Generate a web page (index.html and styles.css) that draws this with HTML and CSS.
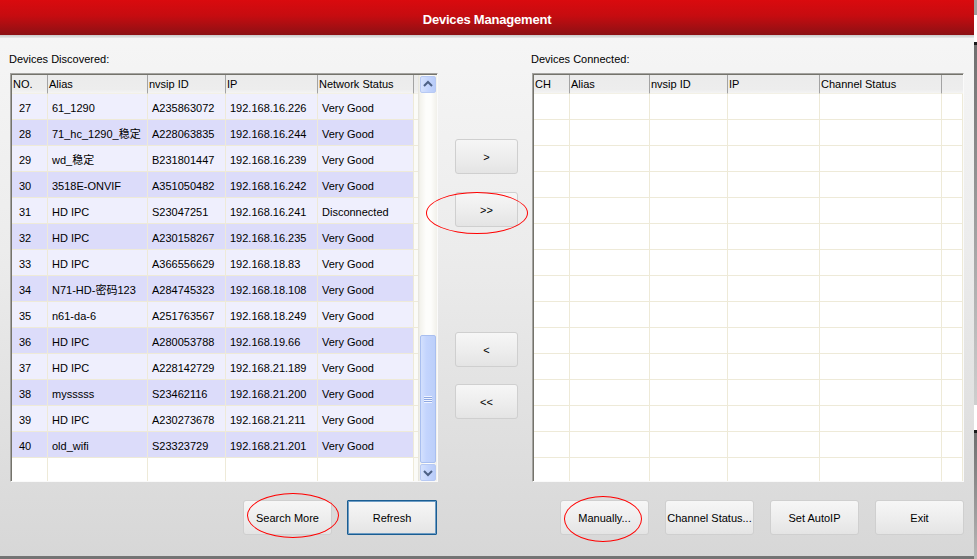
FILE: index.html
```html
<!DOCTYPE html>
<html lang="en">
<head>
<meta charset="utf-8">
<title>Devices Management</title>
<link rel="stylesheet" href="styles.css">
</head>
<body>
<div class="screen">
  <div class="window">
    <div class="titlebar">Devices Management</div>
    <div class="title-rule"></div>
    <div class="content">
      <div class="panels">
        <section class="panel">
          <div class="panel-label">Devices Discovered:</div>
          <div class="frame frame-left">
            <div class="list list-left">
              <div class="list-head">
                <div class="hcell">NO.</div>
                <div class="hcell">Alias</div>
                <div class="hcell">nvsip ID</div>
                <div class="hcell">IP</div>
                <div class="hcell">Network Status</div>
                <div class="hcell"></div>
              </div>
              <div class="list-row odd"><div class="cell first">27</div><div class="cell">61_1290</div><div class="cell">A235863072</div><div class="cell">192.168.16.226</div><div class="cell">Very Good</div><div class="cell pad"></div></div>
              <div class="list-row even"><div class="cell first">28</div><div class="cell">71_hc_1290_稳定</div><div class="cell">A228063835</div><div class="cell">192.168.16.244</div><div class="cell">Very Good</div><div class="cell pad"></div></div>
              <div class="list-row odd"><div class="cell first">29</div><div class="cell">wd_稳定</div><div class="cell">B231801447</div><div class="cell">192.168.16.239</div><div class="cell">Very Good</div><div class="cell pad"></div></div>
              <div class="list-row even"><div class="cell first">30</div><div class="cell">3518E-ONVIF</div><div class="cell">A351050482</div><div class="cell">192.168.16.242</div><div class="cell">Very Good</div><div class="cell pad"></div></div>
              <div class="list-row odd"><div class="cell first">31</div><div class="cell">HD IPC</div><div class="cell">S23047251</div><div class="cell">192.168.16.241</div><div class="cell">Disconnected</div><div class="cell pad"></div></div>
              <div class="list-row even"><div class="cell first">32</div><div class="cell">HD IPC</div><div class="cell">A230158267</div><div class="cell">192.168.16.235</div><div class="cell">Very Good</div><div class="cell pad"></div></div>
              <div class="list-row odd"><div class="cell first">33</div><div class="cell">HD IPC</div><div class="cell">A366556629</div><div class="cell">192.168.18.83</div><div class="cell">Very Good</div><div class="cell pad"></div></div>
              <div class="list-row even"><div class="cell first">34</div><div class="cell">N71-HD-密码123</div><div class="cell">A284745323</div><div class="cell">192.168.18.108</div><div class="cell">Very Good</div><div class="cell pad"></div></div>
              <div class="list-row odd"><div class="cell first">35</div><div class="cell">n61-da-6</div><div class="cell">A251763567</div><div class="cell">192.168.18.249</div><div class="cell">Very Good</div><div class="cell pad"></div></div>
              <div class="list-row even"><div class="cell first">36</div><div class="cell">HD IPC</div><div class="cell">A280053788</div><div class="cell">192.168.19.66</div><div class="cell">Very Good</div><div class="cell pad"></div></div>
              <div class="list-row odd"><div class="cell first">37</div><div class="cell">HD IPC</div><div class="cell">A228142729</div><div class="cell">192.168.21.189</div><div class="cell">Very Good</div><div class="cell pad"></div></div>
              <div class="list-row even"><div class="cell first">38</div><div class="cell">mysssss</div><div class="cell">S23462116</div><div class="cell">192.168.21.200</div><div class="cell">Very Good</div><div class="cell pad"></div></div>
              <div class="list-row odd"><div class="cell first">39</div><div class="cell">HD IPC</div><div class="cell">A230273678</div><div class="cell">192.168.21.211</div><div class="cell">Very Good</div><div class="cell pad"></div></div>
              <div class="list-row even"><div class="cell first">40</div><div class="cell">old_wifi</div><div class="cell">S23323729</div><div class="cell">192.168.21.201</div><div class="cell">Very Good</div><div class="cell pad"></div></div>
              <div class="list-row"><div class="cell"></div><div class="cell"></div><div class="cell"></div><div class="cell"></div><div class="cell"></div><div class="cell pad"></div></div>
            </div>
            <div class="vscroll">
              <div class="sbtn sbtn-up">
                <svg width="16" height="17" viewBox="0 0 16 17"><path d="M4 10 L8 6 L12 10" fill="none" stroke="#4d6185" stroke-width="2"/></svg>
              </div>
              <div class="strack"></div>
              <div class="sthumb"><span class="grip"></span></div>
              <div class="sbtn sbtn-down">
                <svg width="16" height="17" viewBox="0 0 16 17"><path d="M4 7 L8 11 L12 7" fill="none" stroke="#4d6185" stroke-width="2"/></svg>
              </div>
            </div>
          </div>
        </section>

        <div class="movers">
          <button class="btn mover">&gt;</button>
          <button class="btn mover mover-2">&gt;&gt;</button>
          <button class="btn mover mover-3">&lt;</button>
          <button class="btn mover mover-4">&lt;&lt;</button>
        </div>

        <section class="panel">
          <div class="panel-label">Devices Connected:</div>
          <div class="frame frame-right">
            <div class="list list-right">
              <div class="list-head">
                <div class="hcell">CH</div>
                <div class="hcell">Alias</div>
                <div class="hcell">nvsip ID</div>
                <div class="hcell">IP</div>
                <div class="hcell">Channel Status</div>
                <div class="hcell"></div>
              </div>
              <div class="list-row"><div class="cell"></div><div class="cell"></div><div class="cell"></div><div class="cell"></div><div class="cell"></div><div class="cell"></div></div>
              <div class="list-row"><div class="cell"></div><div class="cell"></div><div class="cell"></div><div class="cell"></div><div class="cell"></div><div class="cell"></div></div>
              <div class="list-row"><div class="cell"></div><div class="cell"></div><div class="cell"></div><div class="cell"></div><div class="cell"></div><div class="cell"></div></div>
              <div class="list-row"><div class="cell"></div><div class="cell"></div><div class="cell"></div><div class="cell"></div><div class="cell"></div><div class="cell"></div></div>
              <div class="list-row"><div class="cell"></div><div class="cell"></div><div class="cell"></div><div class="cell"></div><div class="cell"></div><div class="cell"></div></div>
              <div class="list-row"><div class="cell"></div><div class="cell"></div><div class="cell"></div><div class="cell"></div><div class="cell"></div><div class="cell"></div></div>
              <div class="list-row"><div class="cell"></div><div class="cell"></div><div class="cell"></div><div class="cell"></div><div class="cell"></div><div class="cell"></div></div>
              <div class="list-row"><div class="cell"></div><div class="cell"></div><div class="cell"></div><div class="cell"></div><div class="cell"></div><div class="cell"></div></div>
              <div class="list-row"><div class="cell"></div><div class="cell"></div><div class="cell"></div><div class="cell"></div><div class="cell"></div><div class="cell"></div></div>
              <div class="list-row"><div class="cell"></div><div class="cell"></div><div class="cell"></div><div class="cell"></div><div class="cell"></div><div class="cell"></div></div>
              <div class="list-row"><div class="cell"></div><div class="cell"></div><div class="cell"></div><div class="cell"></div><div class="cell"></div><div class="cell"></div></div>
              <div class="list-row"><div class="cell"></div><div class="cell"></div><div class="cell"></div><div class="cell"></div><div class="cell"></div><div class="cell"></div></div>
              <div class="list-row"><div class="cell"></div><div class="cell"></div><div class="cell"></div><div class="cell"></div><div class="cell"></div><div class="cell"></div></div>
              <div class="list-row"><div class="cell"></div><div class="cell"></div><div class="cell"></div><div class="cell"></div><div class="cell"></div><div class="cell"></div></div>
              <div class="list-row"><div class="cell"></div><div class="cell"></div><div class="cell"></div><div class="cell"></div><div class="cell"></div><div class="cell"></div></div>
            </div>
          </div>
        </section>
      </div>

      <div class="actions">
        <div class="actions-left">
          <button class="btn action">Search More</button>
          <button class="btn action action-focus">Refresh</button>
        </div>
        <div class="actions-right">
          <button class="btn action">Manually...</button>
          <button class="btn action">Channel Status...</button>
          <button class="btn action">Set AutoIP</button>
          <button class="btn action">Exit</button>
        </div>
      </div>
    </div>

    <div class="mark mark-move"></div>
    <div class="mark mark-search"></div>
    <div class="mark mark-manual"></div>
  </div>
  <div class="edge"></div>
</div>
</body>
</html>
```

FILE: styles.css
```css
html, body {
  margin: 0;
  padding: 0;
}

body {
  background: #747474;
  font-family: "Liberation Sans", "Noto Sans CJK SC", sans-serif;
  font-size: 11px;
  color: #000;
}

.screen {
  display: flex;
  width: 977px;
  height: 559px;
  overflow: hidden;
}

.window {
  position: relative;
  width: 974px;
  height: 556px;
  display: flex;
  flex-direction: column;
  background: linear-gradient(#f7f7f7 0%, #ececec 45%, #d7d7d7 100%);
}

.edge {
  width: 3px;
  height: 559px;
  background: linear-gradient(
    #a0a0a0 0px, #a0a0a0 15px,
    #ffffff 15px, #ffffff 42px,
    #1a1a1a 42px, #1a1a1a 45px,
    #6f6f6f 45px, #cfcfcf 405px,
    #ffffff 405px, #ffffff 430px,
    #1a1a1a 430px, #1a1a1a 433px,
    #6f6f6f 433px, #b8b8b8 559px);
}

.titlebar {
  height: 35px;
  box-sizing: border-box;
  padding-top: 4px;
  line-height: 31px;
  text-align: center;
  color: #fff;
  font-weight: bold;
  font-size: 13px;
  letter-spacing: -0.2px;
  background: linear-gradient(#da0a0e 0%, #c60c10 45%, #8c1014 100%);
}

.title-rule {
  height: 3px;
  background: linear-gradient(#c9c9c9, #e9e9e9);
}

.content {
  flex: 1;
  padding: 15px 10px 0 10px;
  display: flex;
  flex-direction: column;
}

.panels,
.actions {
  display: grid;
  grid-template-columns: 428px 94px 432px;
}

.panel-label {
  height: 13px;
  line-height: 13px;
  margin-bottom: 7px;
  margin-left: -1px;
  white-space: nowrap;
}

.frame {
  height: 409px;
  box-sizing: border-box;
  display: flex;
  background: #fff;
  border-top: 1px solid #a4a3a0;
  border-left: 1px solid #a4a3a0;
  border-right: 1px solid #fafafa;
  border-bottom: 1px solid #fafafa;
  box-shadow: inset 1px 1px 0 #74736b;
  padding: 1px 0 0 1px;
}

.list {
  flex: 1;
  overflow: hidden;
}

.list-left .list-head,
.list-left .list-row {
  display: grid;
  grid-template-columns: 36px 100px 78px 92px 96px 4px;
}

.list-right .list-head,
.list-right .list-row {
  display: grid;
  grid-template-columns: 36px 80px 78px 92px 122px 21px;
}

.list-head {
  height: 19px;
}

.hcell {
  box-sizing: border-box;
  height: 19px;
  line-height: 18px;
  padding-left: 1px;
  background: linear-gradient(#ebebeb, #ededed 80%, #f4f4f4);
  border-right: 1px solid #a3a3a3;
  border-bottom: 1px solid #f3f1e6;
  white-space: nowrap;
  overflow: hidden;
}

.hcell:last-child {
  border-right: none;
}

.list-row {
  height: 26px;
}

.cell {
  box-sizing: border-box;
  height: 26px;
  padding-top: 4px;
  padding-left: 4px;
  line-height: 21px;
  border-right: 1px solid #eeead8;
  border-bottom: 1px solid #eeead8;
  white-space: nowrap;
  overflow: hidden;
}

.cell.first {
  padding-left: 7px;
}

.list-row.odd .cell {
  background: #efeffd;
}

.list-row.even .cell {
  background: #dcdcfa;
}

.list-row .cell.pad {
  background: #fbfbf8;
  border-right: none;
}

.vscroll {
  width: 19px;
  display: flex;
  flex-direction: column;
  background: linear-gradient(to right, #e3e2da 0px, #f3f2ec 2px, #fdfdfb 8px, #fdfdfb 13px, #f1f0ea 19px);
}

.sbtn {
  width: 16px;
  height: 17px;
  margin-left: 2px;
  box-sizing: border-box;
  border: 1px solid #b7c9f3;
  border-radius: 2px;
  background: linear-gradient(to right, #d6e2fd, #c4d5fd 50%, #b9ccf8);
}

.sbtn svg {
  display: block;
  margin: -1px 0 0 -1px;
}

.sbtn-up {
  margin-top: 1px;
}

.strack {
  flex: 1;
}

.sthumb {
  height: 128px;
  width: 16px;
  margin-left: 2px;
  margin-bottom: 1px;
  box-sizing: border-box;
  border: 1px solid #a9bfef;
  border-radius: 2px;
  background: linear-gradient(to right, #d3e0fd, #c3d4fd 40%, #bccff9);
  display: flex;
  align-items: center;
  justify-content: center;
}

.grip {
  display: block;
  width: 8px;
  height: 7px;
  background: repeating-linear-gradient(#f0f4ff 0px, #f0f4ff 1px, #8ea8e2 1px, #8ea8e2 2px);
}

.btn {
  font: inherit;
  color: #000;
  margin: 0;
  padding: 0;
  box-sizing: border-box;
  height: 35px;
  border: 1px solid #cfcfcf;
  border-radius: 3px;
  background: linear-gradient(#f6f6f6, #ececec 60%, #e4e4e4);
  white-space: nowrap;
}

.movers {
  display: flex;
  flex-direction: column;
  align-items: flex-start;
  padding: 86px 0 0 17px;
}

.mover {
  width: 63px;
}

.mover-2 {
  margin-top: 18px;
}

.mover-3 {
  margin-top: 105px;
}

.mover-4 {
  margin-top: 17px;
}

.actions {
  margin-top: 18px;
}

.actions-left {
  display: flex;
  justify-content: flex-end;
  gap: 15px;
  padding-right: 1px;
}

.actions-right {
  grid-column: 3;
  display: flex;
  justify-content: flex-end;
  gap: 16px;
}

.action {
  width: 89px;
}

.action-focus {
  width: 90px;
  border: 1px solid #1a5d92;
  border-radius: 1px;
  box-shadow: inset 0 0 0 1px #6d9cc4;
}

.mark {
  position: absolute;
  box-sizing: border-box;
  border: 1px solid #ff0000;
  border-radius: 50%;
  pointer-events: none;
}

.mark-move {
  left: 426px;
  top: 192px;
  width: 102px;
  height: 42px;
}

.mark-search {
  left: 247px;
  top: 493px;
  width: 92px;
  height: 45px;
}

.mark-manual {
  left: 564px;
  top: 496px;
  width: 78px;
  height: 46px;
}
```
